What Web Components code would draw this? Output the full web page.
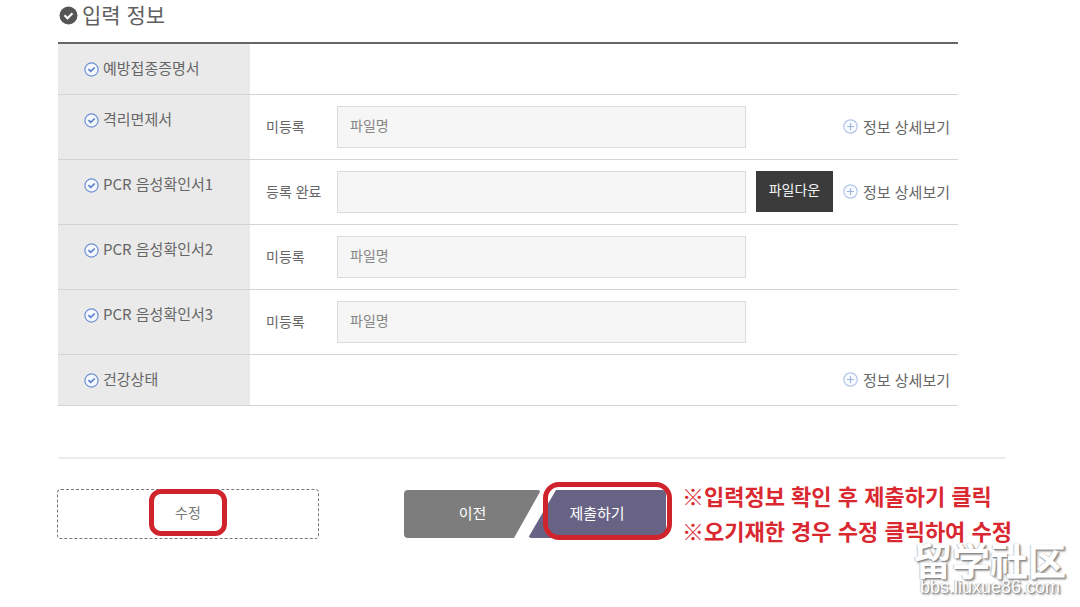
<!DOCTYPE html>
<html lang="ko">
<head>
<meta charset="utf-8">
<title>입력 정보</title>
<style>
  body {
    margin: 0;
    background: #fff;
    color: #666;
    font-family: "Noto Sans CJK KR", "Noto Sans", sans-serif;
    font-size: 14px;
  }
</style>
</head>
<body>
<entry-page>
  <section-title>입력 정보</section-title>
  <info-table></info-table>
  <action-bar slot="actions"></action-bar>
  <site-mark slot="mark" name="留学社区" host="bbs.liuxue86.com"></site-mark>
</entry-page>

<script>
(function () {
  function attach(el, html) {
    const root = el.attachShadow({ mode: "open" });
    root.innerHTML = html;
    return root;
  }

  class EntryPage extends HTMLElement {
    connectedCallback() {
      attach(this, `
        <style>
          :host { display: block; position: relative; min-height: 100vh; }
          main { padding: 0 74px 0 58px; }
          .info { padding-right: 48px; }
          hr { margin: 51px 0 31px; border: 0; border-top: 2px solid #ececec; }
        </style>
        <main>
          <div class="info"><slot></slot></div>
          <hr>
          <slot name="actions"></slot>
        </main>
        <slot name="mark"></slot>
      `);
    }
  }

  class SectionTitle extends HTMLElement {
    connectedCallback() {
      attach(this, `
        <style>
          :host { display: block; padding-bottom: 14px; }
          h2 {
            display: flex;
            align-items: center;
            gap: 4px;
            margin: 0 0 0 1px;
            color: #5f5f5f;
            font-size: 21px;
            font-weight: 400;
            line-height: 28px;
          }
          svg { margin-top: 3px; }
        </style>
        <h2>
          <svg width="19" height="19" viewBox="0 0 19 19" aria-hidden="true">
            <circle cx="9.5" cy="9.5" r="9" fill="#555"/>
            <path d="M5.5 9.3l3 2.9 5-5" fill="none" stroke="#fff" stroke-width="2.2"/>
          </svg>
          <slot></slot>
        </h2>
      `);
    }
  }

  class ItemLabel extends HTMLElement {
    connectedCallback() {
      attach(this, `
        <style>
          :host {
            display: flex;
            align-items: center;
            gap: 4px;
            font-size: 15px;
            line-height: 24px;
          }
          svg { flex: none; margin-top: 3px; }
        </style>
        <svg width="15" height="15" viewBox="0 0 15 15" aria-hidden="true">
          <circle cx="7.5" cy="7.5" r="6.6" fill="#f4f8ff" stroke="#6f8fd2" stroke-width="1.2"/>
          <path d="M4.4 7.2l2.3 2.2 4-3.9" fill="none" stroke="#5b7fca" stroke-width="1.7"/>
        </svg>
        <slot></slot>
      `);
    }
  }

  class FileField extends HTMLElement {
    connectedCallback() {
      const status = this.getAttribute("status");
      const hint = this.getAttribute("hint") || "";
      attach(this, `
        <style>
          :host { display: flex; align-items: center; flex: 1; }
          label { flex: none; width: 71px; padding-bottom: 2px; line-height: 20px; }
          input {
            box-sizing: border-box;
            flex: 1;
            min-width: 0;
            height: 42px;
            padding: 0 12px 4px;
            border: 1px solid #dcdcdc;
            border-radius: 0;
            background: #f6f6f6;
            color: #666;
            font: inherit;
          }
          input::placeholder { color: #858585; opacity: 1; }
        </style>
        <label for="file">${status}</label>
        <input id="file" type="text" placeholder="${hint}" readonly>
      `);
    }
  }

  class DownButton extends HTMLElement {
    connectedCallback() {
      attach(this, `
        <style>
          :host { display: block; }
          button {
            display: block;
            width: 77px;
            height: 41px;
            padding: 0 0 5px;
            border: 0;
            background: #3b3b3b;
            color: #f4f4f4;
            font: inherit;
          }
        </style>
        <button type="button"><slot></slot></button>
      `);
    }
  }

  class DetailLink extends HTMLElement {
    connectedCallback() {
      attach(this, `
        <style>
          :host { display: block; }
          a {
            display: flex;
            align-items: center;
            gap: 5px;
            color: #666;
            font-size: 15px;
            line-height: 20px;
            text-decoration: none;
            white-space: nowrap;
          }
        </style>
        <a href="#">
          <svg width="15" height="15" viewBox="0 0 15 15" aria-hidden="true">
            <circle cx="7.5" cy="7.5" r="6.7" fill="#f8fbff" stroke="#b4c6e6" stroke-width="1.2"/>
            <path d="M7.5 4v7M4 7.5h7" stroke="#9fb6de" stroke-width="1.2"/>
          </svg>
          <slot></slot>
        </a>
      `);
    }
  }

  class InfoTable extends HTMLElement {
    rows = [
      { label: "예방접종증명서" },
      { label: "격리면제서", status: "미등록", hint: "파일명", detail: true },
      { label: "PCR 음성확인서1", status: "등록 완료", down: true, detail: true },
      { label: "PCR 음성확인서2", status: "미등록", hint: "파일명" },
      { label: "PCR 음성확인서3", status: "미등록", hint: "파일명" },
      { label: "건강상태", detail: true },
    ];

    renderRow(row) {
      const field = row.status
        ? `<file-field status="${row.status}" hint="${row.hint || ""}"></file-field>`
        : "";
      const down = row.down ? "<down-button>파일다운</down-button>" : "";
      const detail = row.detail ? "<detail-link>정보 상세보기</detail-link>" : "";
      return `
        <tr class="${row.status ? "file" : ""}">
          <th scope="row"><item-label>${row.label}</item-label></th>
          <td>
            <div class="cell">
              ${field}
              <div class="tools">${down}<span class="detail">${detail}</span></div>
            </div>
          </td>
        </tr>`;
    }

    connectedCallback() {
      attach(this, `
        <style>
          :host { display: block; }
          table {
            width: 100%;
            border-top: 2px solid #666;
            border-spacing: 0;
            table-layout: fixed;
          }
          col.head { width: 192px; }
          th, td {
            height: 51px;
            box-sizing: border-box;
            border-bottom: 1px solid #d4d4d4;
            padding: 0;
          }
          th {
            padding: 12px 0 0 26px;
            background: #eaeaea;
            font-weight: 400;
            text-align: left;
            vertical-align: top;
          }
          td { padding: 0 8px 1px 16px; }
          .file th, .file td { height: 65px; }
          .cell { display: flex; align-items: center; justify-content: flex-end; gap: 10px; }
          .tools { display: flex; align-items: center; flex: none; width: 194px; }
          .detail { margin-left: auto; }
        </style>
        <table>
          <colgroup><col class="head"><col></colgroup>
          <tbody>${this.rows.map((row) => this.renderRow(row)).join("")}</tbody>
        </table>
      `);
    }
  }

  // red hand-drawn box around its content; "over" lets it lie on top of a button
  class RedMark extends HTMLElement {
    connectedCallback() {
      attach(this, `
        <style>
          :host {
            box-sizing: border-box;
            display: inline-block;
            padding: 8px 21px;
            border: 5px solid #d0242c;
            border-radius: 12px;
          }
          :host([over]) {
            position: absolute;
            inset: -8px -6px -2px 15px;
            padding: 0;
            border-radius: 16px;
            pointer-events: none;
          }
        </style>
        <slot></slot>
      `);
    }
  }

  class ActionBar extends HTMLElement {
    connectedCallback() {
      attach(this, `
        <style>
          :host { display: flex; align-items: flex-start; }
          button {
            display: block;
            flex: none;
            height: 48px;
            border: 0;
            padding: 0 0 4px;
            color: #fff;
            font: inherit;
            font-size: 15px;
          }
          .edit {
            display: flex;
            align-items: center;
            justify-content: center;
            box-sizing: border-box;
            width: 262px;
            height: 50px;
            margin: -1px 0 0 -1px;
            border: 1px dashed #777;
            border-radius: 4px;
            background: #fff;
            color: #777;
            font-size: 14px;
            line-height: 21px;
          }
          .steps { display: flex; flex: none; margin-left: 85px; }
          .prev {
            width: 137px;
            border-radius: 4px;
            background: #7d7d7d;
            clip-path: polygon(0 0, 100% 0, 110px 100%, 0 100%);
          }
          .next { position: relative; margin-left: -13px; }
          .submit {
            width: 138px;
            border-radius: 4px;
            background: #686385;
            clip-path: polygon(28px 0, 100% 0, 100% 100%, 0 100%);
          }
          p {
            margin: -12px 0 0 16px;
            color: #da2830;
            font-size: 22px;
            font-weight: 700;
            line-height: 35px;
            white-space: nowrap;
          }
        </style>
        <button class="edit" type="button"><red-mark>수정</red-mark></button>
        <div class="steps">
          <button class="prev" type="button">이전</button>
          <div class="next">
            <button class="submit" type="button">제출하기</button>
            <red-mark over></red-mark>
          </div>
        </div>
        <p>※입력정보 확인 후 제출하기 클릭<br>※오기재한 경우 수정 클릭하여 수정</p>
      `);
    }
  }

  class SiteMark extends HTMLElement {
    connectedCallback() {
      attach(this, `
        <style>
          :host {
            position: absolute;
            right: 14px;
            bottom: 10px;
            display: block;
            color: #fff;
            text-align: center;
            text-shadow: 1px 1px 1px #888, 2px 2px 2px #aaa, -1px 0 1px #ccc;
          }
          div { white-space: nowrap; }
          .name {
            font-family: "Noto Sans CJK SC", sans-serif;
            font-size: 38px;
            font-weight: 700;
            line-height: 36px;
          }
          .host {
            font-family: "Liberation Sans", sans-serif;
            font-size: 18px;
            line-height: 20px;
          }
        </style>
        <div class="name">${this.getAttribute("name")}</div>
        <div class="host">${this.getAttribute("host")}</div>
      `);
    }
  }

  customElements.define("item-label", ItemLabel);
  customElements.define("file-field", FileField);
  customElements.define("down-button", DownButton);
  customElements.define("detail-link", DetailLink);
  customElements.define("info-table", InfoTable);
  customElements.define("section-title", SectionTitle);
  customElements.define("red-mark", RedMark);
  customElements.define("action-bar", ActionBar);
  customElements.define("site-mark", SiteMark);
  customElements.define("entry-page", EntryPage);
})();
</script>
</body>
</html>
